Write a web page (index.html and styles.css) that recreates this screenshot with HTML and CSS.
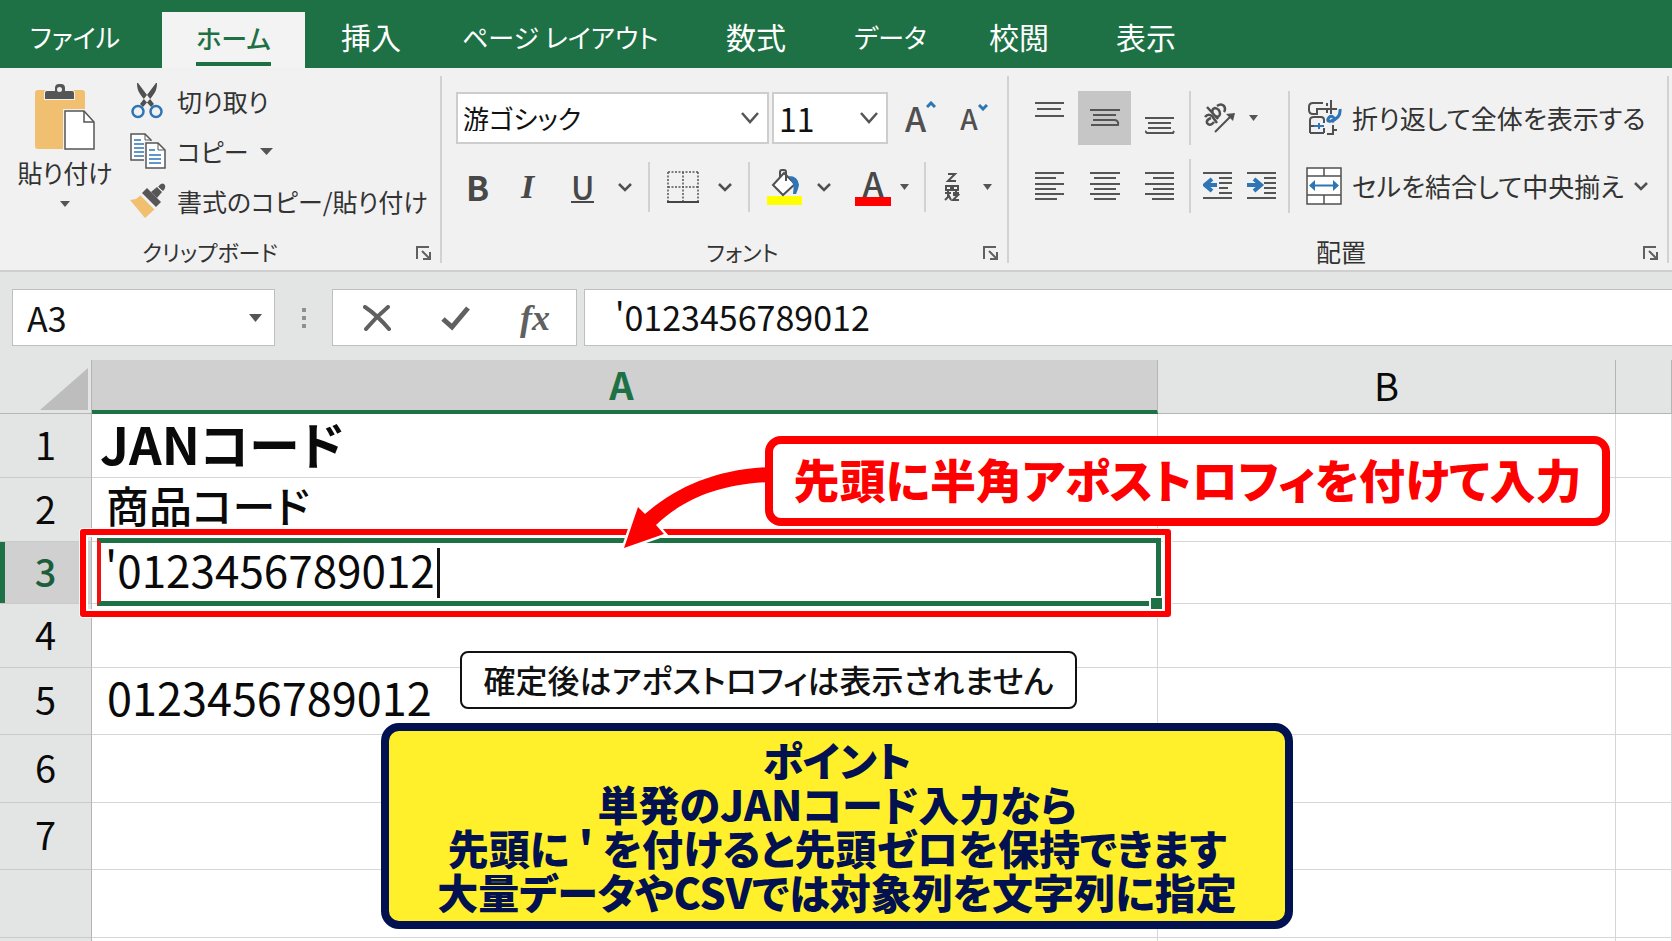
FILE: index.html
```html
<!DOCTYPE html>
<html lang="ja">
<head>
<meta charset="utf-8">
<title>JANコード - Excel</title>
<link rel="stylesheet" href="styles.css">
</head>
<body>
<nav class="tabs" aria-label="リボン">
  <button class="tab tab-kana tab-file">ファイル</button>
  <button class="tab tab-kana tab-active"><span class="tab-label">ホーム</span></button>
  <button class="tab tab-insert">挿入</button>
  <button class="tab tab-kana tab-page">ページ レイアウト</button>
  <button class="tab tab-formula">数式</button>
  <button class="tab tab-kana tab-data">データ</button>
  <button class="tab tab-review">校閲</button>
  <button class="tab">表示</button>
</nav>

<section class="ribbon">
  <div class="group group-clipboard">
    <div class="group-body">
      <button class="paste">
        <svg width="60" height="66" viewBox="0 0 60 66" aria-hidden="true">
          <rect x="0" y="6" width="50" height="59" rx="3" fill="#f0c070"/>
          <path d="M10 15V9q0-2 2-2h8V4q0-4 4-4h2q4 0 4 4v3h7q2 0 2 2v6z" fill="#565656" stroke="#f1f1f1" paint-order="stroke" stroke-width="2"/>
          <circle cx="24.500" cy="5.500" r="2.500" fill="#f1f1f1"/>
          <path d="M30 27h19l10 11v27H30z" fill="#fff" stroke="#f1f1f1" stroke-width="4"/>
          <path d="M30 27h19l10 11v27H30z" fill="#fff" stroke="#555" stroke-width="1.500"/>
          <path d="M49 27v11h10" fill="none" stroke="#555" stroke-width="1.500"/>
        </svg>
        <span>貼り付け</span>
        <svg class="tri" width="10" height="6" viewBox="0 0 10 6" aria-hidden="true"><path d="M0 0h10L5 6z"/></svg>
      </button>
      <div class="clip-list">
        <button class="clip-item">
          <svg width="36" height="36" viewBox="0 0 36 36" aria-hidden="true">
            <path d="M7 0c0 8 3 11 6 15l8 9 3-3L14 8 8 0zM27 0c0 8-3 11-6 15l-8 9-3-3L20 8l6-8z" fill="#505050"/>
            <circle cx="8" cy="28.500" r="5.500" fill="none" stroke="#2e75b6" stroke-width="2.500"/>
            <circle cx="26" cy="28.500" r="5.500" fill="none" stroke="#2e75b6" stroke-width="2.500"/>
          </svg>
          <span>切り取り</span>
        </button>
        <button class="clip-item">
          <svg width="36" height="36" viewBox="0 0 36 36" aria-hidden="true">
            <path d="M1 1h14l6 6v20H1z" fill="#fff" stroke="#555" stroke-width="1.500"/>
            <path d="M15 1v6h6" fill="none" stroke="#555"/>
            <path d="M4 7h7M4 11h11M4 15h11M4 19h11M4 23h11" stroke="#2e75b6" stroke-width="1.500"/>
            <path d="M16 10h12l7 7v18H16z" fill="#fff" stroke="#f1f1f1" stroke-width="4"/>
            <path d="M16 10h12l7 7v18H16z" fill="#fff" stroke="#555" stroke-width="1.500"/>
            <path d="M28 10v7h7" fill="none" stroke="#555"/>
            <path d="M19 17h6M19 22h12M19 26h12M19 30h12" stroke="#2e75b6" stroke-width="1.500"/>
          </svg>
          <span>コピー</span>
          <svg class="tri" width="13" height="7" viewBox="0 0 13 7" aria-hidden="true"><path d="M0 0h13L6.500 7z"/></svg>
        </button>
        <button class="clip-item">
          <svg width="36" height="36" viewBox="0 0 36 36" aria-hidden="true">
            <path d="M0 17l6-1 5-4 14 14-10 9z" fill="#f0c070"/>
            <path d="M12 10l5-5 14 14-5 5z" fill="#565656"/>
            <path d="M21 9l6-5 5 5-5 6z" fill="#565656"/>
            <path d="M28 4q3-5 6-3 3 3-1 7z" fill="#565656"/>
            <path d="M11 12l14 14" stroke="#f1f1f1" stroke-width="1.500"/>
            <path d="M27 3l6 6" stroke="#f1f1f1"/>
          </svg>
          <span>書式のコピー/貼り付け</span>
        </button>
      </div>
    </div>
    <div class="group-foot">
      <span>クリップボード</span>
      <button class="launcher" aria-label="クリップボードの設定"><svg width="16" height="15" viewBox="0 0 16 15" aria-hidden="true"><path d="M1 13V1h12M6 5l7 7M14 6v7H7" /></svg></button>
    </div>
  </div>

  <div class="group group-font">
    <div class="group-body font-body">
      <div class="row">
        <label class="pick pick-name">
          <select aria-label="フォント名"><option>游ゴシック</option></select>
          <svg width="18" height="12" viewBox="0 0 18 12" aria-hidden="true"><path d="M1 1l8 9 8-9"/></svg>
        </label>
        <label class="pick pick-size">
          <select aria-label="フォント サイズ"><option>11</option></select>
          <svg width="18" height="12" viewBox="0 0 18 12" aria-hidden="true"><path d="M1 1l8 9 8-9"/></svg>
        </label>
        <button class="size-btn grow" aria-label="フォント サイズの拡大"><span>A</span><svg width="10" height="7" viewBox="0 0 10 7" aria-hidden="true"><path d="M1 6l4-4 4 4"/></svg></button>
        <button class="size-btn shrink" aria-label="フォント サイズの縮小"><span>A</span><svg width="10" height="7" viewBox="0 0 10 7" aria-hidden="true"><path d="M1 1l4 4 4-4"/></svg></button>
      </div>
      <div class="tools">
        <button class="tool bold">B</button>
        <button class="tool italic">I</button>
        <button class="tool underline">U</button>
        <button class="more" aria-label="下線の種類"><svg width="14" height="9" viewBox="0 0 14 9" aria-hidden="true"><path d="M1 1l6 6 6-6"/></svg></button>
        <span class="sep"></span>
        <button class="tool" aria-label="罫線"><svg width="32" height="32" viewBox="0 0 32 32" aria-hidden="true">
          <path d="M1 1h30M1 16h30M1 1v29M16 1v29M31 1v29" fill="none" stroke="#555" stroke-width="1.500" stroke-dasharray="2 1.500"/>
          <path d="M0 31h32" stroke="#444" stroke-width="2"/></svg></button>
        <button class="more" aria-label="罫線の種類"><svg width="14" height="9" viewBox="0 0 14 9" aria-hidden="true"><path d="M1 1l6 6 6-6"/></svg></button>
        <span class="sep"></span>
        <button class="tool" aria-label="塗りつぶしの色"><svg width="36" height="36" viewBox="0 0 36 36" aria-hidden="true">
          <rect x="0" y="27" width="35" height="9" fill="#ffff00"/>
          <path d="M17 4l11 11-12 11L6 16z" fill="#fff" stroke="#505050" stroke-width="2"/>
          <path d="M13 9V3q0-2 2-2h2q2 0 2 2v9" fill="none" stroke="#505050" stroke-width="2"/>
          <path d="M22 7q9 0 10 9l-1 4-2 5-3 0q1-8 0-10z" fill="#2e75b6"/></svg></button>
        <button class="more" aria-label="塗りつぶしの色の選択"><svg width="14" height="9" viewBox="0 0 14 9" aria-hidden="true"><path d="M1 1l6 6 6-6"/></svg></button>
        <button class="tool font-color" aria-label="フォントの色"><span>A</span></button>
        <button class="more" aria-label="フォントの色の選択"><svg class="tri" width="9" height="6" viewBox="0 0 9 6" aria-hidden="true"><path d="M0 0h9L4.500 6z"/></svg></button>
        <span class="sep"></span>
        <button class="tool" aria-label="ふりがなの表示"><svg width="16" height="30" viewBox="0 0 16 30" fill="none" stroke="#505050" stroke-width="2" aria-hidden="true">
          <path d="M4 2h7L4 9h8"/>
          <path d="M2 14h5v4H2zM9 14h5v4H9zM1 21h6M9 21h6M4 18v7M12 18v4M1 28l4-4 2 4M9 23h5l-5 5h6"/></svg></button>
        <button class="more" aria-label="ふりがなの設定"><svg class="tri" width="9" height="6" viewBox="0 0 9 6" aria-hidden="true"><path d="M0 0h9L4.500 6z"/></svg></button>
      </div>
    </div>
    <div class="group-foot">
      <span>フォント</span>
      <button class="launcher" aria-label="フォントの設定"><svg width="16" height="15" viewBox="0 0 16 15" aria-hidden="true"><path d="M1 13V1h12M6 5l7 7M14 6v7H7" /></svg></button>
    </div>
  </div>

  <div class="group group-align">
    <div class="group-body align-body">
      <div class="align-grid">
        <button class="al" aria-label="上揃え"><svg width="30" height="32" viewBox="0 0 30 32" aria-hidden="true"><path d="M0 1h29M2 7h24M0 14h29"/></svg></button>
        <button class="al al-on" aria-label="上下中央揃え"><svg width="30" height="32" viewBox="0 0 30 32" aria-hidden="true"><path d="M0 8h30M3 13h23M3 18h22q4 1 3 5H1"/></svg></button>
        <button class="al" aria-label="下揃え"><svg width="30" height="32" viewBox="0 0 30 32" aria-hidden="true"><path d="M0 16h29M3 21h23M3 26h23M0 29l2 2h26l1-2"/></svg></button>
        <button class="al" aria-label="左揃え"><svg width="30" height="32" viewBox="0 0 30 32" aria-hidden="true"><path d="M0 3h29M0 8h21M0 14h29M0 19h21M0 24h29M0 29h22"/></svg></button>
        <button class="al" aria-label="中央揃え"><svg width="30" height="32" viewBox="0 0 30 32" aria-hidden="true"><path d="M0 3h30M4 8h22M0 14h30M4 19h22M0 24h30M4 29h22"/></svg></button>
        <button class="al" aria-label="右揃え"><svg width="30" height="32" viewBox="0 0 30 32" aria-hidden="true"><path d="M0 3h29M8 8h21M0 14h29M8 19h21M0 24h29M7 29h22"/></svg></button>
      </div>
      <div class="indent-col">
        <div class="indent-row">
          <button class="al-sm" aria-label="方向"><svg width="32" height="32" viewBox="0 0 32 32" fill="none" stroke="#505050" stroke-width="2.500" aria-hidden="true">
            <path d="M12 30L29 13" stroke-width="2"/><path d="M23 12l9-1-2 8z" fill="#505050" stroke="none"/>
            <path d="M2 15q3-4 7-1l5 7M8 16q-5 2-4 5 3 4 7-1"/>
            <path d="M4 5l11 12M10 12q-2-5 2-6 5 1 5 6-1 4-4 2M14 4q4-3 7 0 2 3 0 6"/></svg></button>
          <button class="more" aria-label="方向の設定"><svg class="tri" width="9" height="6" viewBox="0 0 9 6" aria-hidden="true"><path d="M0 0h9L4.500 6z"/></svg></button>
        </div>
        <div class="indent-row">
          <button class="al-sm" aria-label="インデントを減らす"><svg width="30" height="28" viewBox="0 0 30 28" aria-hidden="true"><path class="ln" d="M0 1h29M16 6h13M16 11h13M16 16h9M16 21h13M0 26h29"/><path class="ar" d="M14 13H3M9 7l-7 6 7 6"/></svg></button>
          <button class="al-sm" aria-label="インデントを増やす"><svg width="30" height="28" viewBox="0 0 30 28" aria-hidden="true"><path class="ln" d="M0 1h29M17 6h12M17 11h12M17 16h12M17 21h12M0 26h29"/><path class="ar" d="M0 13h12M7 7l7 6-7 6"/></svg></button>
        </div>
      </div>
      <div class="wrap-col">
        <button class="wide">
          <svg width="36" height="38" viewBox="0 0 36 38" fill="none" stroke="#505050" stroke-width="2" aria-hidden="true">
            <path d="M17 4H7q-4 0-4 4v3q0 4 4 4h4v-5h10v4M21 4v3M25 1v14M21 10h10M4 34V21q0-3 4-3h7q3 0 3 3v3M4 34h14M18 29v5M4 27h4M27 26v9h-6M27 31h4"/>
            <path d="M8 27h10M13 24v6" stroke="#2e75b6"/><path d="M34 10q1 9-9 12-4 1-3-2 2-4 5-2t-1 5" stroke="#2e75b6" stroke-width="3"/></svg>
          <span>折り返して全体を表示する</span>
        </button>
        <button class="wide">
          <svg width="36" height="38" viewBox="0 0 36 38" fill="none" stroke="#505050" stroke-width="1.500" aria-hidden="true">
            <path d="M1 1h34v36H1zM1 9h34M1 28h34M18 1v8M18 28v9" fill="#fff"/>
            <path d="M5 18.500h26" stroke="#2e75b6" stroke-width="2"/>
            <path d="M9 13l-6 5.500 6 5.500zM27 13l6 5.500-6 5.500z" fill="#2e75b6" stroke="none"/></svg>
          <span>セルを結合して中央揃え</span>
          <svg class="chev" width="14" height="9" viewBox="0 0 14 9" aria-hidden="true"><path d="M1 1l6 6 6-6"/></svg>
        </button>
      </div>
    </div>
    <div class="group-foot">
      <span>配置</span>
      <button class="launcher" aria-label="配置の設定"><svg width="16" height="15" viewBox="0 0 16 15" aria-hidden="true"><path d="M1 13V1h12M6 5l7 7M14 6v7H7" /></svg></button>
    </div>
  </div>
</section>

<section class="formula-bar">
  <label class="name-box">
    <input type="text" value="A3" aria-label="名前ボックス">
    <svg class="tri" width="13" height="8" viewBox="0 0 13 8" aria-hidden="true"><path d="M0 0h13L6.500 8z"/></svg>
  </label>
  <span class="dots"><i></i><i></i><i></i></span>
  <div class="fx-box">
    <button aria-label="キャンセル"><svg width="28" height="26" viewBox="0 0 28 26" aria-hidden="true"><path d="M2 2q12 8 24 22M25 2Q13 12 3 24" fill="none" stroke="#606060" stroke-width="4" stroke-linecap="round"/></svg></button>
    <button aria-label="入力"><svg width="30" height="26" viewBox="0 0 30 26" aria-hidden="true"><path d="M2 14l9 8L27 3" fill="none" stroke="#606060" stroke-width="5"/></svg></button>
    <button class="fx" aria-label="関数の挿入">fx</button>
  </div>
  <input class="formula" type="text" value="'0123456789012" aria-label="数式バー">
</section>

<main class="sheet">
  <table class="grid">
    <colgroup><col class="col-head"><col class="col-a"><col class="col-b"><col></colgroup>
    <thead>
      <tr><th class="corner"><svg width="48" height="42" viewBox="0 0 48 42" aria-hidden="true"><path d="M48 0v42H0z" fill="#bdbdbd"/></svg></th><th class="sel-col">A</th><th>B</th><th></th></tr>
    </thead>
    <tbody>
      <tr class="h64"><th>1</th><td class="title">JANコード</td><td></td><td></td></tr>
      <tr class="h64"><th>2</th><td class="subtitle">商品コード</td><td></td><td></td></tr>
      <tr class="h62 sel-row"><th>3</th><td class="editing">'0123456789012<span class="caret"></span></td><td></td><td></td></tr>
      <tr class="h64"><th>4</th><td></td><td></td><td></td></tr>
      <tr class="h67"><th>5</th><td class="code">0123456789012</td><td></td><td></td></tr>
      <tr class="h68"><th>6</th><td></td><td></td><td></td></tr>
      <tr class="h67"><th>7</th><td></td><td></td><td></td></tr>
      <tr class="h68"><th></th><td></td><td></td><td></td></tr>
      <tr><th></th><td></td><td></td><td></td></tr>
    </tbody>
  </table>
  <div class="selection"><span class="handle"></span></div>
  <div class="frame"></div>
  <svg class="arrow" width="160" height="100" viewBox="0 0 160 100" aria-hidden="true">
    <path d="M160 17C105 19 65 38 35 64L28 57 14 98 54 84 46 75C70 52 105 34 160 32z" fill="#ff0000" stroke="#fff" stroke-width="5" paint-order="stroke"/>
  </svg>
  <div class="callout">先頭に半角アポストロフィを付けて入力</div>
  <div class="note">確定後はアポストロフィは表示されません</div>
  <div class="point">
    <p>ポイント</p>
    <p>単発のJANコード入力なら</p>
    <p>先頭に ' を付けると先頭ゼロを保持できます</p>
    <p>大量データやCSVでは対象列を文字列に指定</p>
  </div>
</main>
</body>
</html>
```
FILE: styles.css
```css
* { box-sizing: border-box; }

body {
  margin: 0;
  min-height: 100vh;
  display: flex;
  flex-direction: column;
  overflow: hidden;
  background: #e3e4e4;
  color: #333;
  font-family: "Noto Sans CJK JP", "Noto Sans", sans-serif;
  font-size: 26px;
  line-height: 1;
  font-feature-settings: "palt";
}

button, input, select {
  margin: 0;
  padding: 0;
  border: 0;
  background: none;
  color: inherit;
  font: inherit;
  font-feature-settings: inherit;
}

svg { display: block; flex: none; }
.tri { fill: #555; }

/* Tabs */
.tabs {
  display: flex;
  align-items: flex-end;
  height: 68px;
  background: #1e7145;
  color: #fff;
  font-size: 30px;
}
.tab { height: 56px; padding-bottom: 8px; white-space: nowrap; text-align: left; }
.tab-kana { padding-bottom: 6px; font-size: 26px; }
.tab-file { width: 162px; padding-left: 30px; }
.tab-active {
  display: flex;
  align-items: center;
  justify-content: center;
  width: 143px;
  padding: 0;
  background: #f3f3f3;
  color: #1e7145;
  font-weight: 500;
}
.tab-label { padding: 10px 0 11px; border-bottom: 4px solid #1e7145; }
.tab-insert { width: 157px; padding-left: 36px; }
.tab-page { width: 264px; }
.tab-formula { width: 128px; }
.tab-data { width: 135px; }
.tab-review { width: 127px; }

/* Ribbon */
.ribbon {
  display: flex;
  height: 204px;
  padding: 8px 3px 7px 0;
  background: #f1f1f1;
  border-bottom: 2px solid #cfcfcf;
}
.group {
  display: flex;
  flex-direction: column;
  border-right: 2px solid #d2d2d2;
}
.group-body { flex: 1; display: flex; }
.group-foot {
  display: grid;
  grid-template-columns: 1fr auto;
  align-items: center;
  height: 24px;
  padding-right: 8px;
  font-size: 22px;
  text-align: center;
}
.launcher { padding-top: 4px; }
.launcher svg { fill: none; stroke: #606060; stroke-width: 2; }
.group-clipboard { width: 442px; flex: none; }
.group-clipboard .group-foot { padding-left: 4px; }
.group-font { width: 567px; flex: none; }
.group-font .group-foot { padding-left: 60px; }
.group-align { flex: 1; }
.group-align .group-foot { padding-left: 30px; font-size: 25px; }

.paste {
  flex: none;
  display: flex;
  flex-direction: column;
  align-items: center;
  width: 130px;
  padding-top: 8px;
  font-size: 25px;
}
.paste span { margin: 10px 0 16px; }
.clip-list { display: flex; flex-direction: column; }
.clip-item { display: flex; align-items: center; gap: 11px; height: 50px; font-size: 25px; white-space: nowrap; }

.font-body { flex-direction: column; padding: 16px 0 0 14px; }
.row { display: flex; align-items: center; }
.pick {
  display: grid;
  align-items: center;
  height: 52px;
  margin-right: 3px;
  background: #fff;
  border: 2px solid #cdcdcd;
}
.pick > * { grid-area: 1 / 1; }
.pick select { appearance: none; height: 100%; padding-left: 5px; color: #111; }
.pick svg { justify-self: end; margin-right: 8px; fill: none; stroke: #555; stroke-width: 2.5; pointer-events: none; }
.pick-name { width: 313px; }
.pick-size { width: 116px; font-size: 32px; }
.size-btn { display: flex; align-items: flex-start; color: #505050; font-weight: 500; }
.size-btn svg { fill: none; stroke: #2e75b6; stroke-width: 3; }
.grow { margin-left: 14px; font-size: 34px; }
.shrink { margin-left: 24px; font-size: 28px; }

.tools {
  display: grid;
  grid-template-columns: 55px 50px 47px 30px 19px 51px 30px 19px 50px 38px 45px 24px 20px 39px 9px;
  align-items: center;
  justify-items: start;
  height: 50px;
  margin: 18px 0 0 10px;
  color: #484848;
}
.tool { font-size: 34px; }
.bold { font-weight: 700; }
.italic { font-family: "Liberation Serif", serif; font-style: italic; font-weight: 700; }
.underline { font-weight: 500; font-size: 32px; line-height: 30px; border-bottom: 2px solid #484848; }
.more svg, .chev { fill: none; stroke: #505050; stroke-width: 2.5; }
.more .tri { fill: #555; stroke: none; }
.sep { width: 2px; height: 50px; background: #d2d2d2; }
.font-color { width: 36px; border-bottom: 9px solid #ff0000; font-weight: 500; line-height: 28px; }

.align-body { padding: 15px 0 0 14px; }
.align-grid {
  display: grid;
  grid-template-columns: 53px 53px 53px;
  grid-template-rows: 54px 54px;
  row-gap: 14px;
  column-gap: 2px;
}
.al { display: flex; align-items: center; justify-content: center; }
.al svg, .ln { fill: none; stroke: #555; stroke-width: 2; }
.ar { fill: none; stroke: #2e75b6; stroke-width: 4; }
.al-on { background: #c6c6c6; }
.indent-col {
  display: grid;
  grid-template-rows: 54px 54px;
  row-gap: 14px;
  margin-left: 3px;
  height: 122px;
  border-right: 2px solid #d2d2d2;
}
.indent-row { display: flex; align-items: center; gap: 14px; padding: 0 11px 0 12px; border-left: 2px solid #d2d2d2; }
.wrap-col { display: grid; grid-template-rows: 54px 54px; row-gap: 14px; margin-left: 16px; }
.wide { display: flex; align-items: center; gap: 10px; white-space: nowrap; }

/* Formula bar */
.formula-bar { display: flex; height: 88px; padding: 17px 0 14px 12px; color: #111; }
.name-box {
  display: grid;
  align-items: center;
  width: 263px;
  background: #fff;
  border: 1px solid #bfbfbf;
  font-size: 34px;
}
.name-box > * { grid-area: 1 / 1; }
.name-box input { width: 100%; padding-left: 14px; }
.name-box svg { justify-self: end; margin-right: 12px; }
.dots { display: flex; flex-direction: column; align-items: center; justify-content: center; gap: 4px; width: 57px; }
.dots i { width: 4px; height: 4px; background: #909090; }
.fx-box {
  display: flex;
  align-items: center;
  justify-content: space-between;
  width: 245px;
  margin-right: 7px;
  padding: 0 26px 0 30px;
  background: #fff;
  border: 1px solid #bfbfbf;
}
.fx { color: #606060; font-family: "Liberation Serif", serif; font-style: italic; font-weight: 700; font-size: 36px; }
.formula { flex: 1; min-width: 0; padding: 0 0 2px 30px; background: #fff; border: 1px solid #bfbfbf; border-right: 0; font-size: 34px; }

/* Sheet */
.sheet { position: relative; flex: 1; overflow: hidden; background: #fff; }
.grid { width: 100%; border-collapse: separate; border-spacing: 0; table-layout: fixed; color: #0a0a0a; }
.col-head { width: 92px; }
.col-a { width: 1066px; }
.col-b { width: 458px; }
.grid th, .grid td { padding: 0; border-right: 1px solid #d6d6d6; border-bottom: 1px solid #d6d6d6; white-space: nowrap; }
.grid th { padding-bottom: 4px; background: #e3e4e4; border-color: #b5b5b5; font-weight: 400; font-size: 38px; }
.grid thead th { height: 54px; }
.grid tbody th { border-bottom-color: #cacaca; }
.grid .corner { padding: 8px 3px 3px 40px; }
.grid thead .sel-col { padding: 0 6px 2px 0; background: #d0d0d0; color: #1e7145; font-weight: 700; border-bottom: 4px solid #1e7145; }
.grid .sel-row th { background: #d0d0d0; color: #1b5e3b; font-weight: 500; box-shadow: inset 5px 0 #1e7145; }
.h62 { height: 62px; }
.h64 { height: 64px; }
.h67 { height: 67px; }
.h68 { height: 68px; }
.grid .title { padding: 0 0 5px 8px; font-size: 51px; font-weight: 700; }
.grid .subtitle { padding: 0 0 10px 14px; font-size: 43px; font-weight: 500; }
.grid .editing { padding-left: 13px; font-size: 44px; }
.grid .code { padding: 0 0 9px 15px; font-size: 45px; }
.caret { display: inline-block; width: 3px; height: 50px; margin-left: 2px; vertical-align: -10px; background: #111; }

/* Annotations over the sheet */
.selection {
  position: absolute;
  left: 97px;
  top: 178px;
  width: 1064px;
  height: 68px;
  border: 5px solid #1e7145;
  border-left: 4px solid #f01010;
}
.handle { position: absolute; right: -8px; bottom: -10px; width: 15px; height: 15px; background: #1e7145; border: 2px solid #fff; }
.frame {
  position: absolute;
  left: 80px;
  top: 169px;
  width: 1091px;
  height: 88px;
  border: 6px solid #ff0000;
  border-radius: 3px;
  box-shadow: 0 0 0 1px #fff, inset 0 0 0 2px #fff;
}
.callout {
  position: absolute;
  left: 765px;
  top: 76px;
  width: 845px;
  padding: 11px 0 17px;
  border: 8px solid #ff0000;
  border-radius: 16px;
  background: #fff;
  color: #ff0000;
  font-size: 46px;
  font-weight: 900;
  text-align: center;
  white-space: nowrap;
}
.arrow { position: absolute; left: 610px; top: 90px; }
.note {
  position: absolute;
  left: 460px;
  top: 291px;
  width: 617px;
  padding: 10px 0 12px;
  border: 2px solid #111;
  border-radius: 8px;
  background: #fff;
  color: #111;
  font-size: 32px;
  font-weight: 500;
  text-align: center;
  white-space: nowrap;
}
.point {
  position: absolute;
  left: 381px;
  top: 363px;
  width: 912px;
  padding: 6px 0 8px;
  border: 8px solid #02114f;
  border-radius: 18px;
  background: #fff02b;
  color: #02114f;
  font-size: 41px;
  font-weight: 900;
  line-height: 44px;
  text-align: center;
  white-space: nowrap;
}
.point p { margin: 0; }
```
